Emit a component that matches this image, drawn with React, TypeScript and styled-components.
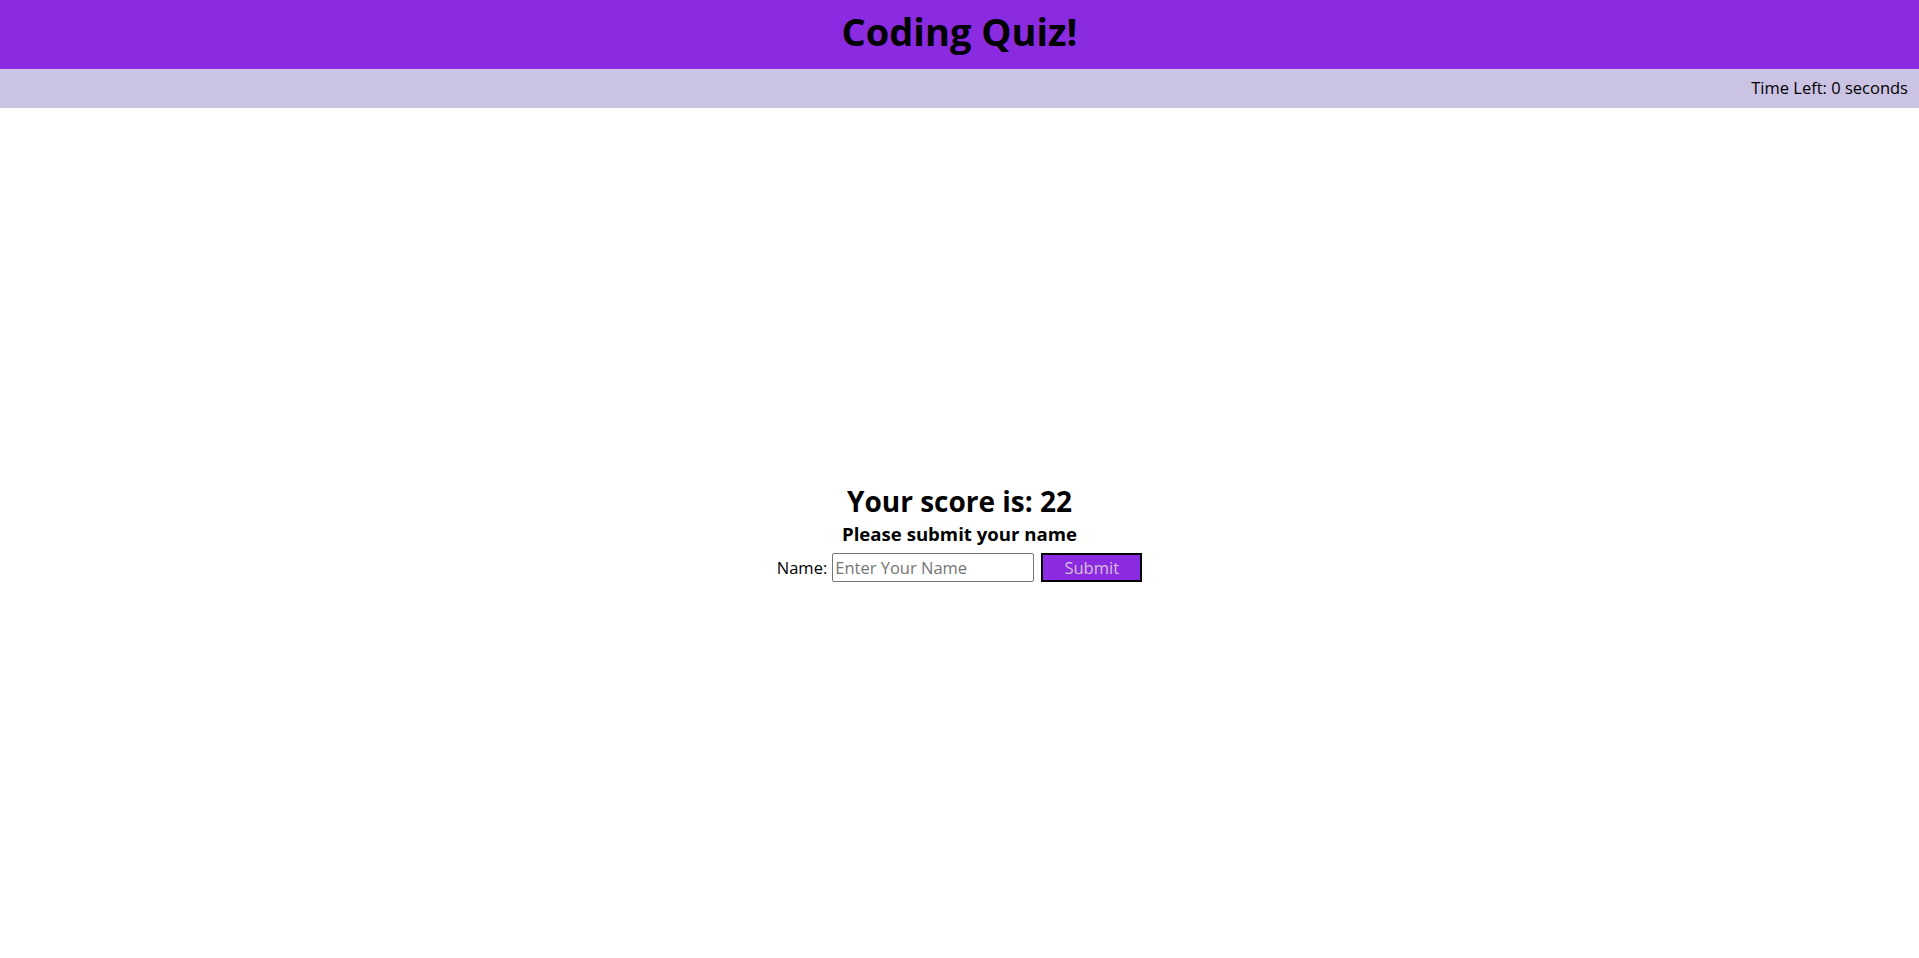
import styled, { createGlobalStyle } from "styled-components";

const GlobalStyle = createGlobalStyle`
  html, body {
    margin: 0;
    padding: 0;
    height: 100%;
  }
  body {
    font-family: "Open Sans", "Noto Sans", sans-serif;
    font-size: 16.5px;
    color: #000;
    background: #fff;
  }
  #root {
    height: 100%;
  }
`;

const App = () => {
  return (
    <Page>
      <GlobalStyle />
      <Header>
        <Title>Coding Quiz!</Title>
      </Header>
      <TimerBar>Time Left: 0 seconds</TimerBar>
      <Main>
        <ScoreBox>
          <Score>Your score is: 22</Score>
          <Prompt>Please submit your name</Prompt>
          <NameForm onSubmit={(e) => e.preventDefault()}>
            <label htmlFor="name">Name:</label>
            <NameInput id="name" type="text" placeholder="Enter Your Name" />
            <SubmitButton type="submit">Submit</SubmitButton>
          </NameForm>
        </ScoreBox>
      </Main>
    </Page>
  );
};

const Page = styled.div`
  display: flex;
  flex-direction: column;
  height: 100vh;
`;

const Header = styled.header`
  height: 69px;
  box-sizing: border-box;
  padding-bottom: 5px;
  background-color: #8a2be2;
  display: flex;
  justify-content: center;
  align-items: center;
`;

const Title = styled.h1`
  margin: 0;
  font-size: 38px;
  font-weight: 700;
  line-height: 1.2;
`;

const TimerBar = styled.div`
  height: 39px;
  box-sizing: border-box;
  padding: 0 11px 3px 0;
  background-color: #cbc3e3;
  display: flex;
  justify-content: flex-end;
  align-items: center;
`;

const Main = styled.main`
  flex-grow: 1;
  display: flex;
  justify-content: center;
  align-items: center;
`;

const ScoreBox = styled.div`
  display: flex;
  flex-direction: column;
  align-items: center;
  margin-bottom: 4px;
`;

const Score = styled.h2`
  margin: 0;
  font-size: 28px;
  line-height: 40px;
  font-weight: 700;
`;

const Prompt = styled.h3`
  margin: 0 0 6px;
  font-size: 18.6px;
  line-height: 26px;
  font-weight: 700;
`;

const NameForm = styled.form`
  display: flex;
  align-items: center;
  gap: 5px;
`;

const NameInput = styled.input`
  width: 202px;
  height: 29px;
  box-sizing: border-box;
  border: 1px solid #767676;
  border-radius: 2px;
  padding: 1px 2px;
  font-family: inherit;
  font-size: 16.5px;
  &::placeholder {
    color: #757575;
  }
`;

const SubmitButton = styled.button`
  margin-left: 2px;
  width: 101px;
  height: 29px;
  box-sizing: border-box;
  background-color: #8a2be2;
  border: 2px solid #000;
  color: #d8bfd8;
  font-family: inherit;
  font-size: 16.5px;
  cursor: pointer;
`;

export default App;
